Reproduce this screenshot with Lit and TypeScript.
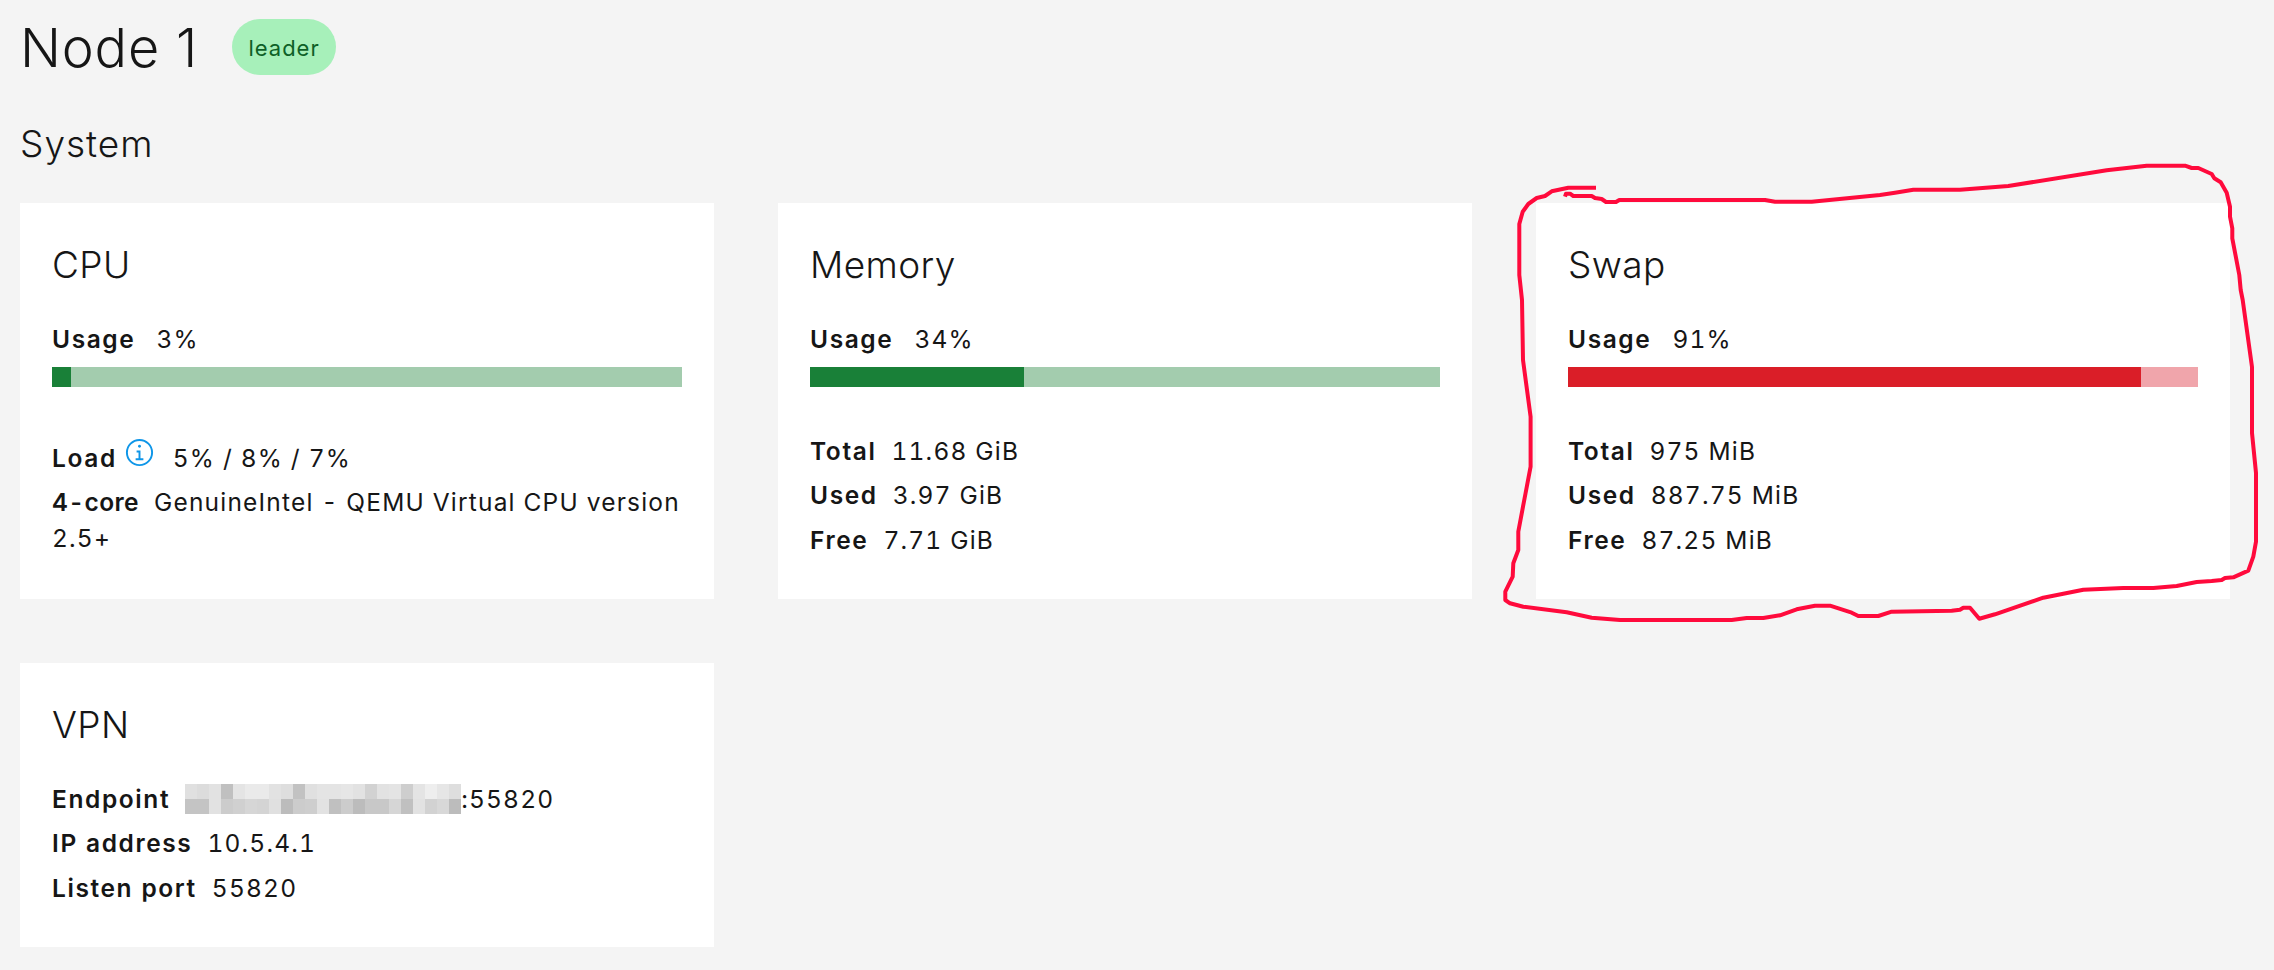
import { LitElement, html, css, svg } from "lit";
import { customElement } from "lit/decorators.js";

const TOP = "e0,dc,e2,c0,e4,ea,ea,e2,de,c2,e0,e4,e4,e6,e2,d2,e2,e4,ce,e4,ee,e6,de".split(",");
const BOTTOM = "c4,c4,e2,cc,d0,d6,d4,e0,bc,cc,ce,e2,c0,cc,bc,c8,c8,d6,c0,e2,d2,d8,bc".split(",");

const SCRIBBLE = `1565,196.7 1566,193.7 1570,193.7 1573.3,196 1591.7,196 1595,198 1601.7,199 1606,202 1616,202 1619.3,200 1765,200 1775,201.7 1811.7,201.7 1880,195 1895,192.7 1913.3,189.7 1960,189.7 2008.3,186 2106.7,170.3 2146.7,165.7 2185,165.7 2191.7,168 2198.3,168 2211.7,174 2214.3,178.3 2220.7,182.3 2226.7,192.7 2230,206.7 2230,216.7 2232.3,228.3 2232.3,238.3 2239.3,275 2240.7,290 2242.7,300 2252,367 2252,433 2256,473 2256,541.7 2253.3,556.7 2248.3,570.7 2233.3,577.3 2225,578 2221.7,580 2211.7,581 2196.7,582 2186.7,584 2176.7,586 2153.3,588 2123.3,588 2083.3,589.7 2043.3,597.7 1995,614.3 1979.3,618.7 1970,607.7 1963.3,607.7 1960,609.7 1951.7,610.7 1891.7,611.7 1878.3,616 1858.3,616 1851.7,612.7 1830,605.7 1815,605.7 1796.7,609.3 1780,615.3 1763.3,618 1746.7,618 1731.7,620 1620,620 1591.7,617.7 1566.7,612.3 1523.3,606.7 1510,603.3 1505.3,600 1505.3,591.7 1512.7,576.7 1513.3,563.3 1518.3,550 1518.3,531.7 1523,506.7 1525.6,493 1530.6,466.7 1530.6,416.7 1523,360 1522,300 1519.3,275 1519.3,224 1522.7,211.7 1528.3,204 1536.7,198 1545,196 1551.7,191.3 1568.3,187.7 1596,187.7`;

type Row = [string, string];

@customElement("app-root")
export class AppRoot extends LitElement {
  static styles = css`
    :host {
      display: block;
      position: relative;
      min-height: 970px;
      box-sizing: border-box;
      padding: 19px 44px 23px 20px;
      background: #f4f4f4;
      color: #161616;
      font-family: "Inter", "Noto Sans", sans-serif;
      font-size: 24.5px;
      line-height: 36px;
      letter-spacing: 1.2px;
      font-variant-numeric: tabular-nums;
    }
    .header { display: flex; align-items: center; gap: 34px; height: 56px; }
    h1 { margin: 0; padding-top: 2px; font-size: 54px; font-weight: 300; line-height: 56px; letter-spacing: 0.8px; font-variant-numeric: normal; }
    .badge {
      display: flex; align-items: center; justify-content: center; box-sizing: border-box;
      width: 104px; height: 56px; padding-top: 2px; border-radius: 28px;
      background: #a7f0ba; color: #0e6027; font-size: 22px; letter-spacing: 1px;
    }
    h2 { margin: 47px 0 37px; font-size: 37px; font-weight: 300; line-height: 44px; letter-spacing: 1px; }
    .grid { display: grid; grid-template-columns: repeat(3, 694px); gap: 64px; }
    .card { background: #fff; padding: 32px 32px 32.5px; }
    h3 { margin: 0 0 26px; font-size: 37px; font-weight: 300; line-height: 60px; letter-spacing: 0.4px; }
    .row { margin: 0 0 8.5px; }
    .usage { margin-bottom: 10px; }
    b { font-weight: 600; margin-right: 15px; letter-spacing: 1.6px; }
    .usage b { margin-right: 21px; }
    .core b { letter-spacing: 0.4px; }
    .bar { display: flex; height: 20px; margin-bottom: 45.5px; }
    .green { background: #a3ccae; }
    .green .fill { background: #198038; }
    .red { background: #f0a5ab; }
    .red .fill { background: #da1e28; }
    .load { padding-top: 4px; }
    .load b { margin-right: 7px; }
    .info { width: 31px; height: 31px; vertical-align: -1px; margin-right: 18px; fill: #0f96e8; }
    .blur {
      display: inline-grid; grid-template-columns: repeat(23, 12px); grid-auto-rows: 15px;
      vertical-align: 9px;
    }
    .overlay { position: absolute; left: 0; top: 0; width: 2274px; height: 970px; pointer-events: none; }
    .overlay polyline { fill: none; stroke: #ff0a3c; stroke-width: 4; stroke-linejoin: round; stroke-linecap: butt; }
  `;

  private rows(rows: Row[]) {
    return rows.map(([k, v]) => html`<div class="row"><b>${k}</b>${v}</div>`);
  }

  private usage(pct: number, tone: string) {
    return html`
      <div class="row usage"><b>Usage</b>${pct}%</div>
      <div class="bar ${tone}"><div class="fill" style="width:${pct}%"></div></div>
    `;
  }

  render() {
    return html`
      <div class="header"><h1>Node 1</h1><span class="badge">leader</span></div>
      <h2>System</h2>
      <div class="grid">
        <section class="card">
          <h3>CPU</h3>
          ${this.usage(3, "green")}
          <div class="row load"><b>Load</b><svg class="info" viewBox="0 0 32 32">
            <path d="M17 22v-8h-4v2h2v6h-3v2h8v-2h-3z"/>
            <path d="M16 8a1.5 1.5 0 1 0 1.5 1.5A1.5 1.5 0 0 0 16 8z"/>
            <path d="M16 30a14 14 0 1 1 14-14 14 14 0 0 1-14 14zm0-26a12 12 0 1 0 12 12A12 12 0 0 0 16 4z"/>
          </svg>5% / 8% / 7%</div>
          <div class="row core"><b>4-core</b>GenuineIntel - QEMU Virtual CPU version 2.5+</div>
        </section>
        <section class="card">
          <h3>Memory</h3>
          ${this.usage(34, "green")}
          ${this.rows([["Total", "11.68 GiB"], ["Used", "3.97 GiB"], ["Free", "7.71 GiB"]])}
        </section>
        <section class="card">
          <h3>Swap</h3>
          ${this.usage(91, "red")}
          ${this.rows([["Total", "975 MiB"], ["Used", "887.75 MiB"], ["Free", "87.25 MiB"]])}
        </section>
        <section class="card">
          <h3>VPN</h3>
          <div class="row"><b>Endpoint</b><span class="blur">${[...TOP, ...BOTTOM].map(
            (c) => html`<i style="background:#${c}${c}${c}"></i>`
          )}</span>:55820</div>
          ${this.rows([["IP address", "10.5.4.1"], ["Listen port", "55820"]])}
        </section>
      </div>
      <svg class="overlay" viewBox="0 0 2274 970">${svg`<polyline points=${SCRIBBLE}></polyline>`}</svg>
    `;
  }
}
